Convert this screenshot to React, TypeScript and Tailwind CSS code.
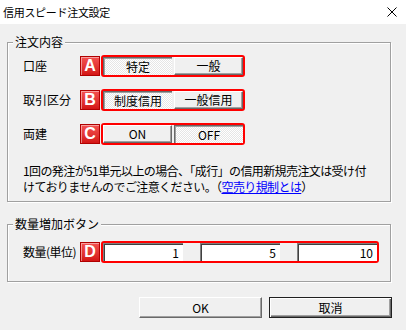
const font = { fontFamily: '"Noto Sans CJK JP", "Noto Sans", sans-serif' }

function Badge({ letter }: { letter: string }) {
  return (
    <div className="w-[20px] h-[20px] flex items-center justify-center border border-[#b00000] bg-gradient-to-b from-[#f45050] to-[#d41414] shadow-[inset_1px_1px_0_rgba(255,255,255,0.45)]">
      <span className="text-white text-[16px] font-bold leading-none" style={{ fontFamily: '"Liberation Sans", Arial, sans-serif' }}>
        {letter}
      </span>
    </div>
  )
}

function Seg({ label, pressed }: { label: string; pressed?: boolean }) {
  if (pressed) {
    return (
      <div className="w-[69px] h-full flex items-center justify-center text-[12px] text-black border-t border-l border-[#696969] border-r-white border-b-white shadow-[inset_1px_1px_0_#a0a0a0] bg-[repeating-conic-gradient(#ffffff_0_25%,#e6e6e6_0_50%)] bg-[length:2px_2px]">
        {label}
      </div>
    )
  }
  return (
    <div className="w-[69px] h-full flex items-center justify-center text-[12px] text-black bg-[#f0f0f0] border-t border-l border-white border-r border-b border-r-[#696969] border-b-[#696969] shadow-[inset_-1px_-1px_0_#a0a0a0]">
      {label}
    </div>
  )
}

function SegRow({ label, letter, left, right, leftPressed }: { label: string; letter: string; left: string; right: string; leftPressed: boolean }) {
  return (
    <div className="flex items-center">
      <div className="w-[57px] text-[12px] text-black">{label}</div>
      <Badge letter={letter} />
      <div className="ml-[1px] w-[144px] h-[22px] border-2 border-[#ff0000] rounded-[3px] flex justify-between">
        <Seg label={left} pressed={leftPressed} />
        <Seg label={right} pressed={!leftPressed} />
      </div>
    </div>
  )
}

function QtyBox({ value }: { value: string }) {
  return (
    <div className="w-[80px] h-full bg-white flex items-center justify-end pr-[4px] text-[12px] text-black border-t border-l border-[#808080] border-r-[#e3e3e3] border-b-[#e3e3e3] shadow-[inset_1px_1px_0_#404040]">
      {value}
    </div>
  )
}

export default function App() {
  return (
    <div className="w-[406px] h-[330px] bg-[#f0f0f0] flex flex-col overflow-hidden" style={font}>
      {/* title bar */}
      <div className="h-[24px] bg-white flex items-center justify-between pl-[3px] pr-[9px]">
        <span className="text-[11px] tracking-[-0.3px] text-black">信用スピード注文設定</span>
        <svg width="10" height="10" viewBox="0 0 10 10">
          <path d="M0.5 0.5 L9.5 9.5 M9.5 0.5 L0.5 9.5" stroke="#000" strokeWidth="1" />
        </svg>
      </div>

      {/* 注文内容 */}
      <div className="relative ml-[7px] mt-[18px] w-[384px] border border-[#a0a0a0] shadow-[inset_1px_1px_0_#fff,1px_1px_0_#fff] pl-[15px] pt-[12px] pb-[6px]">
        <div className="absolute left-[5px] top-[-9px] px-[2px] bg-[#f0f0f0] text-[12px] leading-[16px] text-black">注文内容</div>
        <SegRow label="口座" letter="A" left="特定" right="一般" leftPressed />
        <div className="mt-[12px]">
          <SegRow label="取引区分" letter="B" left="制度信用" right="一般信用" leftPressed />
        </div>
        <div className="mt-[12px]">
          <SegRow label="両建" letter="C" left="ON" right="OFF" leftPressed={false} />
        </div>
        <p className="mt-[18px] text-[12px] leading-[16px] tracking-[-0.6px] text-black whitespace-nowrap">
          1回の発注が51単元以上の場合、「成行」の信用新規売注文は受け付
          <br />
          けておりませんのでご注意ください。（<span className="text-[#0000ff] underline">空売り規制とは</span>）
        </p>
      </div>

      {/* 数量増加ボタン */}
      <div className="relative ml-[7px] mt-[22px] w-[384px] border border-[#a0a0a0] shadow-[inset_1px_1px_0_#fff,1px_1px_0_#fff] pl-[15px] pt-[16px] pb-[18px]">
        <div className="absolute left-[5px] top-[-9px] px-[2px] bg-[#f0f0f0] text-[12px] leading-[16px] text-black">数量増加ボタン</div>
        <div className="flex items-center">
          <div className="w-[57px] text-[12px] text-black whitespace-nowrap tracking-[-0.5px]">数量(単位)</div>
          <Badge letter="D" />
          <div className="ml-[1px] w-[278px] h-[22px] border-2 border-[#ff0000] rounded-[3px] flex justify-between">
            <QtyBox value="1" />
            <QtyBox value="5" />
            <QtyBox value="10" />
          </div>
        </div>
      </div>

      {/* buttons */}
      <div className="mt-[15px] flex justify-end gap-[7px] pr-[14px]">
        <button className="w-[123px] h-[21px] bg-[#f0f0f0] text-[12px] text-black border-t border-l border-white border-r border-b border-r-[#696969] border-b-[#696969] shadow-[inset_-1px_-1px_0_#a0a0a0]">
          OK
        </button>
        <button className="w-[123px] h-[21px] bg-[#f0f0f0] text-[12px] text-black border border-[#202020] shadow-[inset_1px_1px_0_#fff,inset_-1px_-1px_0_#696969,inset_-2px_-2px_0_#a0a0a0]">
          取消
        </button>
      </div>
    </div>
  )
}
